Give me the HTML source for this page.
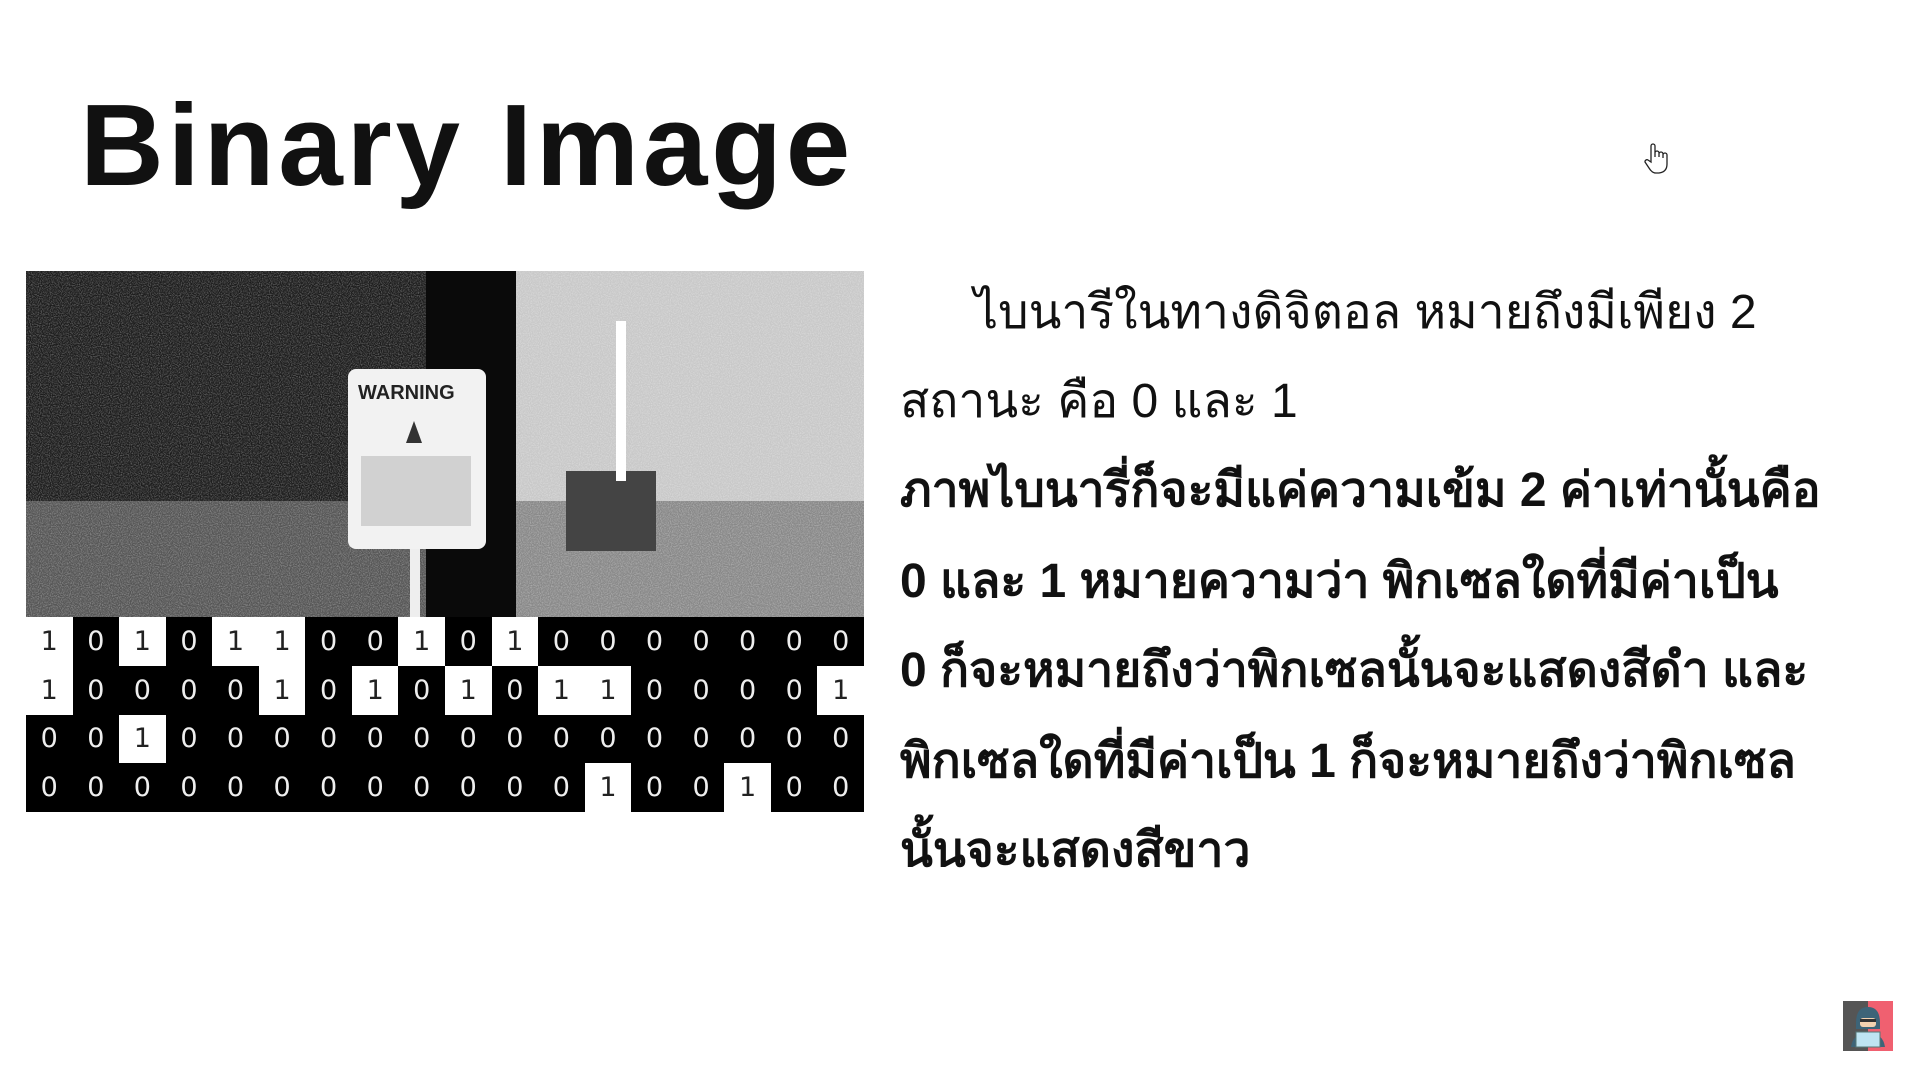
<!DOCTYPE html>
<html><head><meta charset="utf-8"><style>
html,body{margin:0;padding:0;background:#fff;width:1920px;height:1080px;overflow:hidden;position:relative;font-family:"Liberation Sans",sans-serif;}
.title{position:absolute;left:80px;top:87px;font-size:116px;font-weight:bold;color:#111;letter-spacing:3.8px;line-height:1;}
.txt{position:absolute;left:900px;font-size:48px;color:#111;white-space:nowrap;line-height:1;}
.b{font-weight:bold;}
#grid{position:absolute;left:26px;top:617px;width:838px;height:195px;display:grid;grid-template-columns:repeat(18,1fr);grid-template-rows:repeat(4,1fr);}
#grid div{display:flex;align-items:center;justify-content:center;font-size:27px;font-family:"DejaVu Sans","Liberation Sans",sans-serif;}
.w{background:#fff;color:#222}.k{background:#000;color:#eee}
</style></head><body>
<div class="title">Binary Image</div>

<svg style="position:absolute;left:26px;top:271px" width="838" height="346" viewBox="0 0 838 346">
<defs>
<filter id="n" x="0" y="0" width="100%" height="100%"><feTurbulence type="fractalNoise" baseFrequency="0.9" numOctaves="1" seed="3"/><feColorMatrix values="0 0 0 0 1  0 0 0 0 1  0 0 0 0 1  0 0 0 -2.2 1.35"/></filter>
</defs>
<rect width="838" height="346" fill="#000"/>
<rect x="0" y="0" width="500" height="346" fill="#1c1c1c"/>
<rect x="0" y="230" width="500" height="116" fill="#555"/>
<rect x="490" y="0" width="348" height="346" fill="#c8c8c8"/>
<rect x="490" y="230" width="348" height="116" fill="#888"/>
<rect x="0" y="0" width="838" height="346" filter="url(#n)" opacity="0.35"/>
<rect x="400" y="0" width="90" height="346" fill="#0a0a0a"/>
<rect x="322" y="98" width="138" height="180" rx="8" fill="#f2f2f2"/>
<text x="332" y="128" font-family="Liberation Sans" font-weight="bold" font-size="20" fill="#222">WARNING</text>
<path d="M388 150 l-8 22 h16z" fill="#333"/>
<rect x="335" y="185" width="110" height="70" fill="#bbb" opacity="0.6"/>
<rect x="384" y="278" width="10" height="68" fill="#eee"/>
<rect x="540" y="200" width="90" height="80" fill="#444"/>
<rect x="590" y="50" width="10" height="160" fill="#fff"/>
</svg>

<div id="grid">
<div class="w">1</div><div class="k">0</div><div class="w">1</div><div class="k">0</div><div class="w">1</div><div class="w">1</div><div class="k">0</div><div class="k">0</div><div class="w">1</div><div class="k">0</div><div class="w">1</div><div class="k">0</div><div class="k">0</div><div class="k">0</div><div class="k">0</div><div class="k">0</div><div class="k">0</div><div class="k">0</div>
<div class="w">1</div><div class="k">0</div><div class="k">0</div><div class="k">0</div><div class="k">0</div><div class="w">1</div><div class="k">0</div><div class="w">1</div><div class="k">0</div><div class="w">1</div><div class="k">0</div><div class="w">1</div><div class="w">1</div><div class="k">0</div><div class="k">0</div><div class="k">0</div><div class="k">0</div><div class="w">1</div>
<div class="k">0</div><div class="k">0</div><div class="w">1</div><div class="k">0</div><div class="k">0</div><div class="k">0</div><div class="k">0</div><div class="k">0</div><div class="k">0</div><div class="k">0</div><div class="k">0</div><div class="k">0</div><div class="k">0</div><div class="k">0</div><div class="k">0</div><div class="k">0</div><div class="k">0</div><div class="k">0</div>
<div class="k">0</div><div class="k">0</div><div class="k">0</div><div class="k">0</div><div class="k">0</div><div class="k">0</div><div class="k">0</div><div class="k">0</div><div class="k">0</div><div class="k">0</div><div class="k">0</div><div class="k">0</div><div class="w">1</div><div class="k">0</div><div class="k">0</div><div class="w">1</div><div class="k">0</div><div class="k">0</div>
</div>

<div class="txt" style="left:974px;top:289px">ไบนารีในทางดิจิตอล หมายถึงมีเพียง 2</div>
<div class="txt" style="top:378px">สถานะ คือ 0 และ 1</div>
<div class="txt b" style="top:467px">ภาพไบนารี่ก็จะมีแค่ความเข้ม 2 ค่าเท่านั้นคือ</div>
<div class="txt b" style="top:558px">0 และ 1 หมายความว่า พิกเซลใดที่มีค่าเป็น</div>
<div class="txt b" style="top:647px">0 ก็จะหมายถึงว่าพิกเซลนั้นจะแสดงสีดำ และ</div>
<div class="txt b" style="top:738px">พิกเซลใดที่มีค่าเป็น 1 ก็จะหมายถึงว่าพิกเซล</div>
<div class="txt b" style="top:827px">นั้นจะแสดงสีขาว</div>

<svg style="position:absolute;left:1643px;top:142px" width="30" height="34" viewBox="0 0 30 34">
<path d="M8 20 V4 a2 2 0 0 1 4 0 V15 V11 a2 2 0 0 1 4 0 V15 V12 a2 2 0 0 1 4 0 V16 V13 a2 2 0 0 1 4 0 V22 q0 8 -8 9 h-3 q-4 0 -7 -5 l-4 -6 a2 2 0 0 1 3 -2 z" fill="#fff" stroke="#222" stroke-width="1.3"/>
</svg>

<svg style="position:absolute;left:1843px;top:1001px" width="50" height="50" viewBox="0 0 50 50">
<rect width="25" height="50" fill="#555"/><rect x="25" width="25" height="50" fill="#f06070"/>
<path d="M13 22 q0 -16 12 -16 q12 0 12 16 v6 h-24z" fill="#3d6478"/>
<rect x="17" y="17" width="16" height="9" rx="3" fill="#f3d2b0"/>
<rect x="17" y="18" width="16" height="3" fill="#333"/>
<path d="M8 46 q2 -14 17 -14 q15 0 17 14z" fill="#3d6478"/>
<rect x="13" y="31" width="24" height="15" fill="#bfe4f2" stroke="#577" stroke-width="1"/>
</svg>
</body></html>
